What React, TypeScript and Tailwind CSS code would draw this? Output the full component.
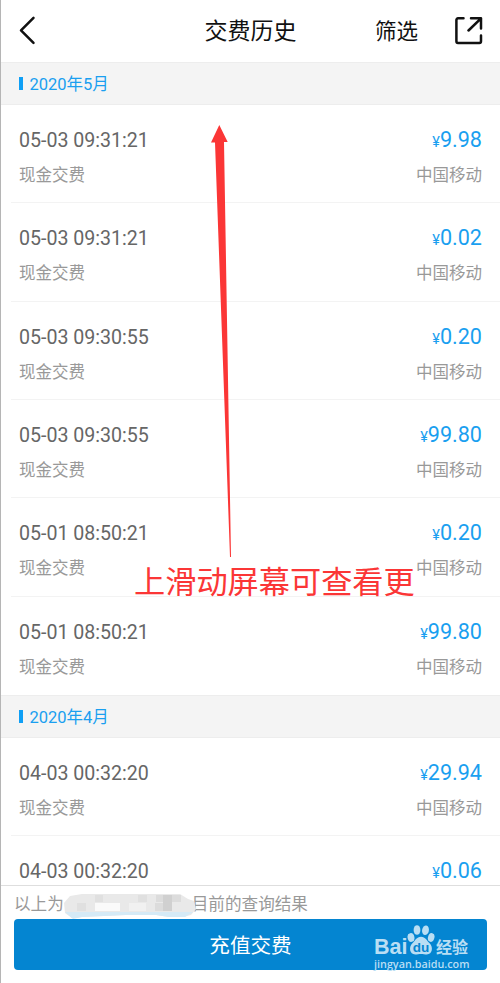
type Payment = { time: string; amount: string; method?: string; carrier?: string };
type Month = { label: string; payments: Payment[] };

const months: Month[] = [
  {
    label: '2020年5月',
    payments: [
      { time: '05-03 09:31:21', amount: '9.98', method: '现金交费', carrier: '中国移动' },
      { time: '05-03 09:31:21', amount: '0.02', method: '现金交费', carrier: '中国移动' },
      { time: '05-03 09:30:55', amount: '0.20', method: '现金交费', carrier: '中国移动' },
      { time: '05-03 09:30:55', amount: '99.80', method: '现金交费', carrier: '中国移动' },
      { time: '05-01 08:50:21', amount: '0.20', method: '现金交费', carrier: '中国移动' },
      { time: '05-01 08:50:21', amount: '99.80', method: '现金交费', carrier: '中国移动' },
    ],
  },
  {
    label: '2020年4月',
    payments: [
      { time: '04-03 00:32:20', amount: '29.94', method: '现金交费', carrier: '中国移动' },
      { time: '04-03 00:32:20', amount: '0.06' },
    ],
  },
];

function Header() {
  return (
    <header className="relative flex h-[62px] shrink-0 items-center justify-between pr-[17px] pl-[18px]">
      <svg className="h-[30px] w-[18px]" viewBox="0 0 18 30" fill="none" stroke="#111" strokeWidth={2.5} strokeLinecap="round" strokeLinejoin="round">
        <path d="M14.500 1.800L2 14.300l12.500 12.500" />
      </svg>
      <h1 className="absolute inset-x-0 top-[15px] text-center text-[23px] leading-[34px] text-[#111]">交费历史</h1>
      <div className="flex items-center gap-[37px]">
        <span className="pt-0.5 text-[21.5px] leading-[34px] text-[#111]">筛选</span>
        <svg className="h-7 w-7" viewBox="0 0 28 28" fill="none" stroke="#111" strokeWidth={2.5} strokeLinecap="round" strokeLinejoin="round">
          <path d="M8.500 1.300H3a1.600 1.600 0 0 0-1.600 1.600v21.400a1.600 1.600 0 0 0 1.600 1.600h21.400a1.600 1.600 0 0 0 1.600-1.600V18.500" />
          <path d="M16 1.300h10V11.500M26 1.300L13.500 13.500" />
        </svg>
      </div>
    </header>
  );
}

function MonthBar({ label }: { label: string }) {
  return (
    <div className="flex h-[42.8px] items-center gap-2 border-y border-[#ededed] bg-[#f4f4f4] pl-[18px]">
      <span className="h-[13px] w-[3.5px] bg-[#0f9ff5]" />
      <span className="-ml-px pt-[3px] text-[16.5px] leading-6 text-[#1a9ff0]">{label}</span>
    </div>
  );
}

function PaymentRow({ time, amount, method, carrier }: Payment) {
  return (
    <li className="ml-2.5 flex h-[98.4px] justify-between border-b border-[#f3f3f3] pt-[22px] pr-[18px] pl-2 last:border-b-0">
      <div className="flex flex-col gap-[7px]">
        <p className="h-7 text-[19.6px] leading-[28px] text-[#666]">{time}</p>
        <p className="text-[16.5px] leading-[28px] text-[#999]">{method}</p>
      </div>
      <div className="flex flex-col gap-[7px] text-right">
        <p className="h-7 text-[21.6px] leading-[25px] text-[#1a9ff0]">
          <span className="text-[14.5px]">¥</span>
          {amount}
        </p>
        <p className="text-[16.5px] leading-[28px] text-[#999]">{carrier}</p>
      </div>
    </li>
  );
}

/* Pixelated patch over the phone number */
function Mosaic() {
  return (
    <svg className="absolute top-[8px] left-[61px] h-[25px] w-[134px]" viewBox="0 0 134 25">
      <path d="M2 9L8 2l12-2h98l8 5 6 2 2 8-5 6-8 2H107l-13-2H64l-44 2-10 1-7-5z" fill="#e9e9e9" />
      <path d="M3 18h128l-8 5h-16l-13-2H64l-44 2-9 2z" fill="#d5eaf6" />
      <path d="M15 9h9v8h-9zM33 1h8v7h-8zM76 1h9v7h-9z" fill="#e0e0e0" />
      <path d="M94 1h8v7h-8zM93 9h8v8h-8zM110 1h9v7h-9z" fill="#dcdcdc" />
      <path d="M101 1h9v16h-9z" fill="#d0d0d0" />
      <path d="M33 9h25v8H33z" fill="#fafafa" />
      <path d="M67 9h17v8H67z" fill="#f1f1f1" />
    </svg>
  );
}

function Watermark() {
  return (
    <div className="absolute top-[5px] right-[15px] h-[46px] w-[98px] text-left text-[#b9def4]">
      <div className="flex h-[34px] items-end">
        <span className="w-[33px] font-['Liberation_Sans'] text-[21.5px] leading-[21px] font-bold">Bai</span>
        <svg className="h-8 w-7 shrink-0 self-start" viewBox="0 0 28 32" fill="currentColor">
          <ellipse cx="4" cy="13.500" rx="3.400" ry="4.400" transform="rotate(-12 4 13.500)" />
          <ellipse cx="10" cy="6" rx="3.400" ry="4.800" />
          <ellipse cx="18.500" cy="6.300" rx="3.400" ry="4.800" transform="rotate(10 18.500 6.300)" />
          <ellipse cx="24.200" cy="13.500" rx="3.200" ry="4.400" transform="rotate(15 24.200 13.500)" />
          <path d="M14 12.800c4.500 0 5.800 4 8.600 6.500 3.800 3.500 3 11.200-2.800 11.200-2.200 0-3.400-.6-5.800-.6s-3.600.6-5.800.6c-5.800 0-6.600-7.700-2.800-11.200C8.200 16.800 9.500 12.800 14 12.800z" />
          <text x="14" y="28" textAnchor="middle" fontFamily="Liberation Sans" fontSize="13.500" fontWeight="bold" fill="#0485d1">du</text>
        </svg>
        <span className="ml-px text-[16px] leading-[21px] font-bold whitespace-nowrap">经验</span>
      </div>
      <p className="font-['Open_Sans'] text-[10.8px] leading-[12px] font-semibold">jingyan.baidu.com</p>
    </div>
  );
}

function Footer() {
  return (
    <footer className="relative h-[98px] shrink-0 border-t border-[#dedede] bg-white pr-[13px] pl-[13px]">
      <p className="h-[33px] pt-[3px] text-[16.6px] leading-[31px] text-[#999]">
        <span>以上为</span>
        <span className="ml-[128px]">目前的查询结果</span>
      </p>
      <Mosaic />
      <button className="relative block h-[51px] w-full rounded bg-[#0485d1] pt-1 text-[20.6px] text-white">
        充值交费
        <Watermark />
      </button>
    </footer>
  );
}

/* Red swipe-up hint drawn over the list */
function SwipeHint() {
  return (
    <div className="pointer-events-none absolute inset-0 text-[#fb3636]">
      <svg className="absolute top-[125px] left-[209px] h-[433px] w-[22px]" viewBox="0 0 22 433" fill="currentColor">
        <path d="M9.300 0L17.700 17H14L21 432H20L5 17.500H1z" />
      </svg>
      <p className="absolute top-[561px] left-[133px] text-[31.2px] leading-[44px] whitespace-nowrap">上滑动屏幕可查看更</p>
    </div>
  );
}

export default function App() {
  return (
    <div className="relative flex h-[983px] w-[500px] flex-col overflow-hidden border-l border-[#b5b5b5] bg-white font-[Roboto,'Noto_Sans_CJK_SC',sans-serif]">
      <Header />
      <main className="min-h-0 flex-1 overflow-hidden">
        {months.map((month) => (
          <section key={month.label}>
            <MonthBar label={month.label} />
            <ul>
              {month.payments.map((payment, i) => (
                <PaymentRow key={i} {...payment} />
              ))}
            </ul>
          </section>
        ))}
      </main>
      <Footer />
      <SwipeHint />
    </div>
  );
}
